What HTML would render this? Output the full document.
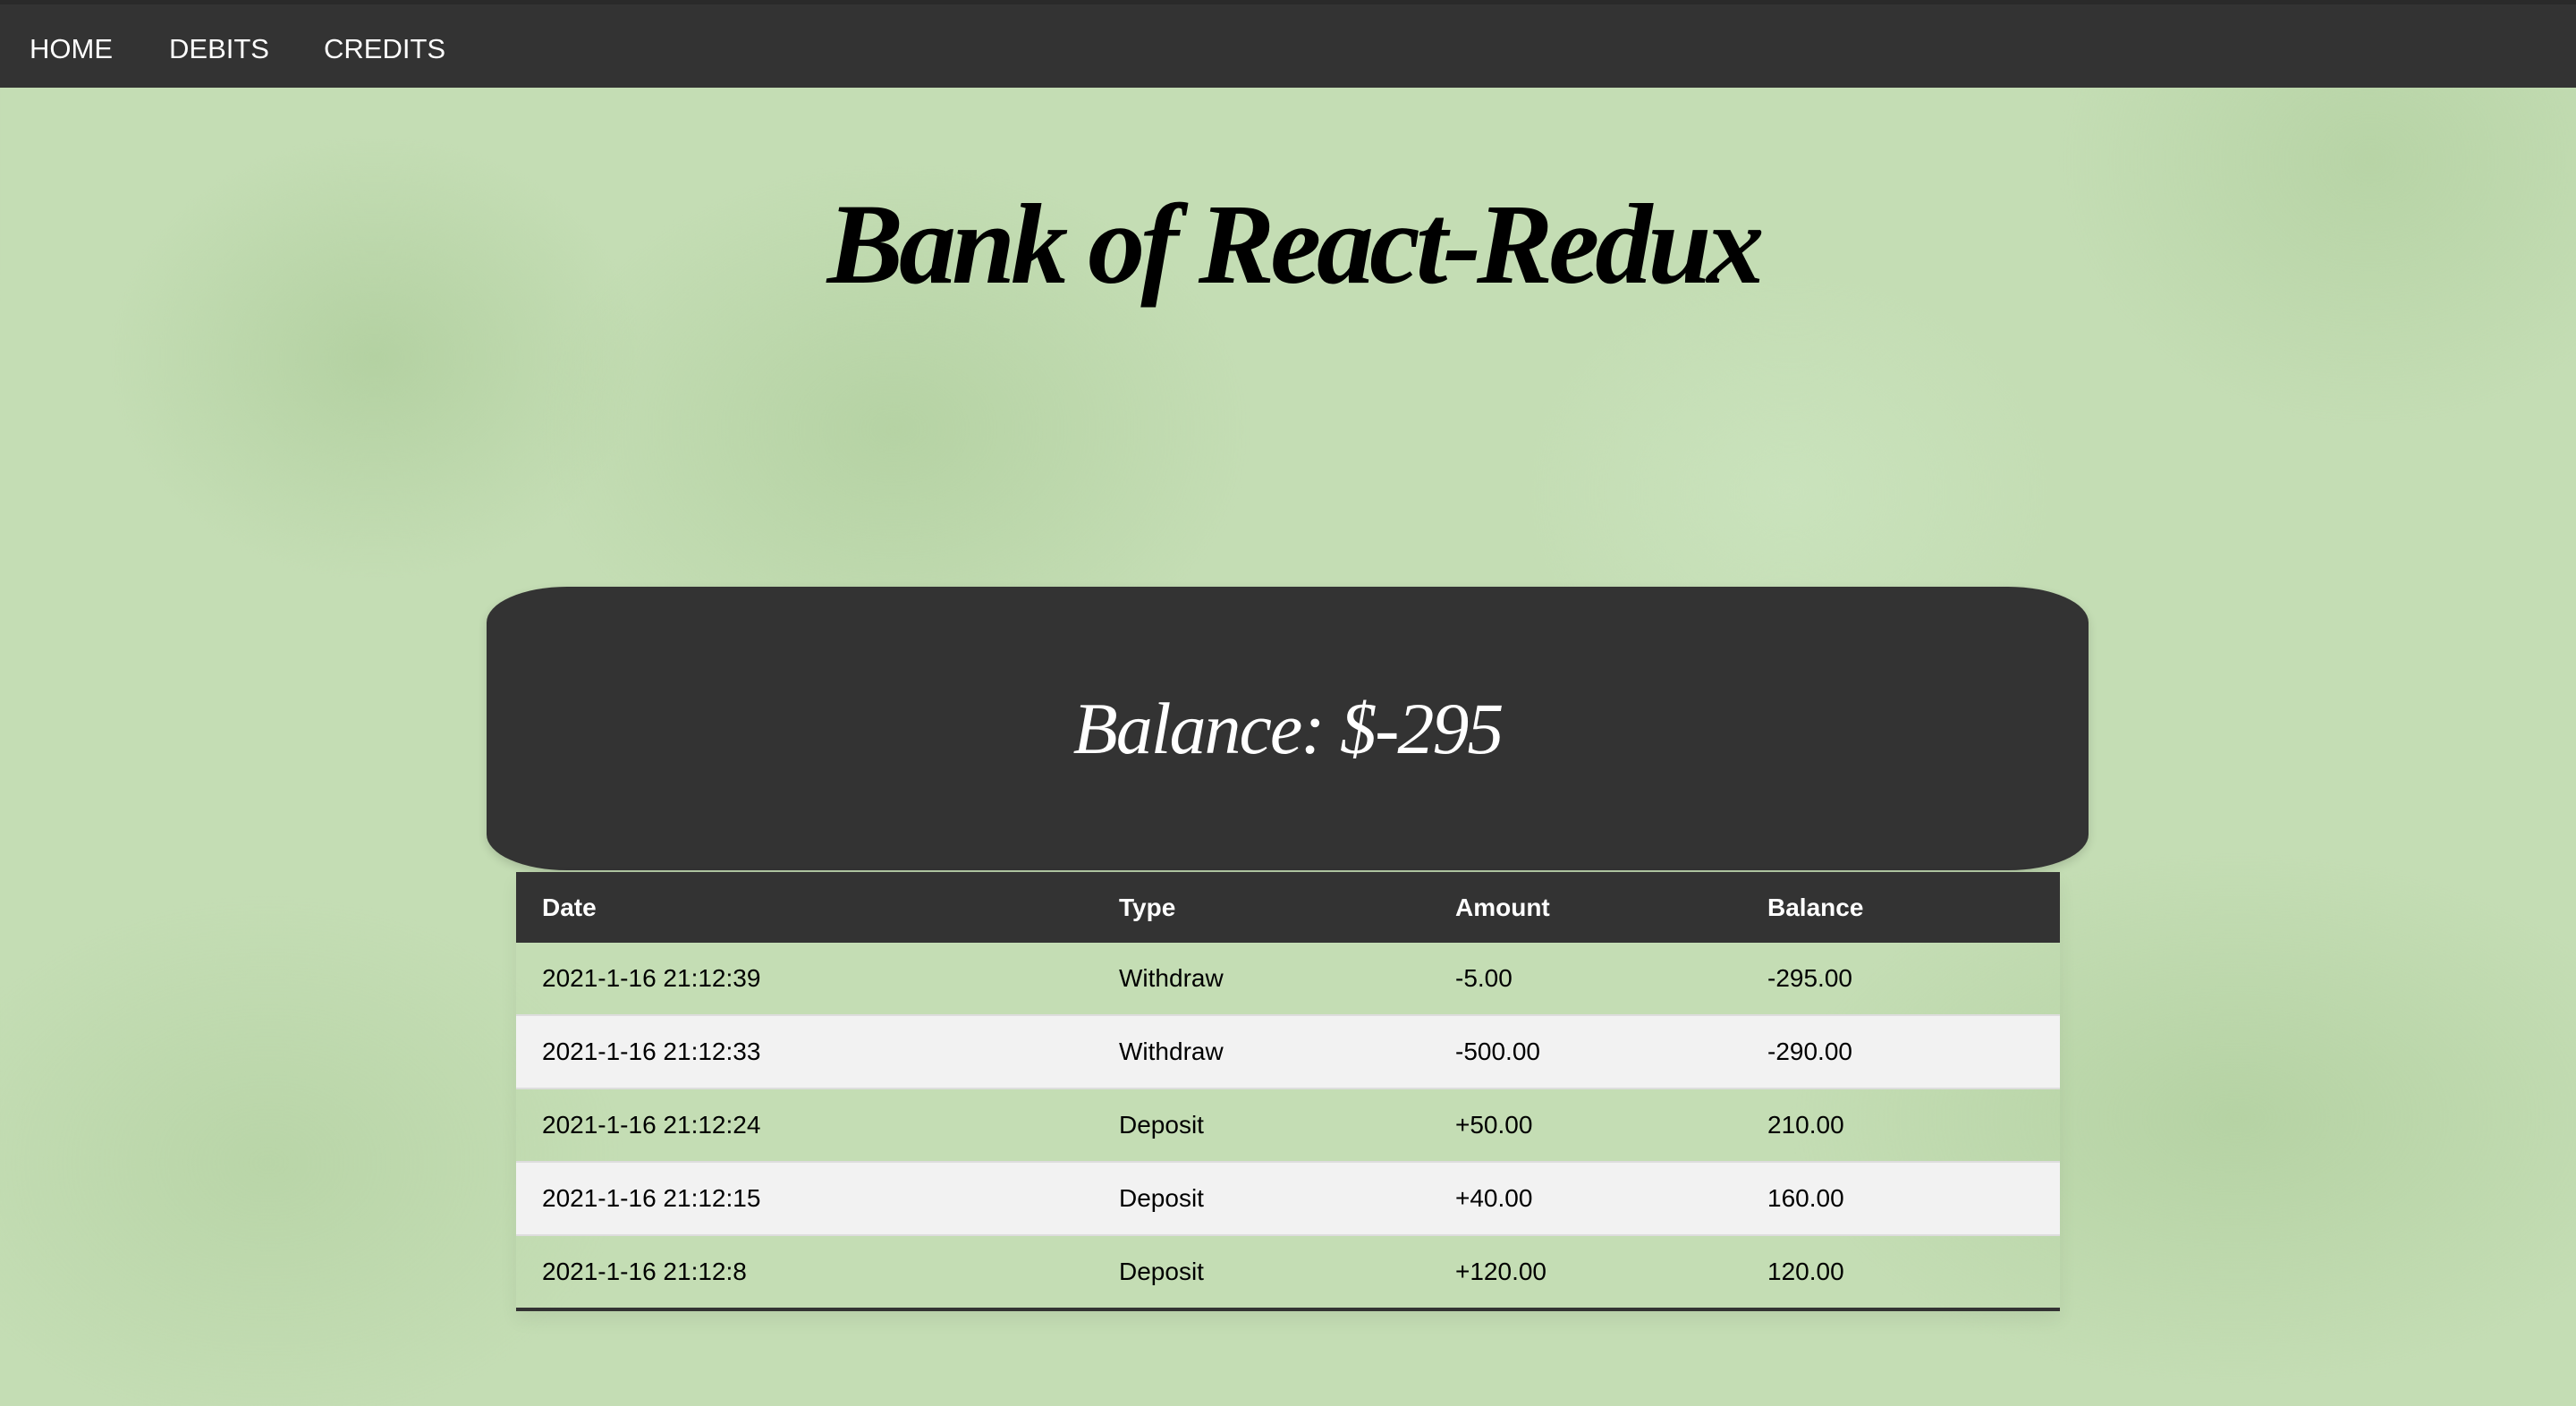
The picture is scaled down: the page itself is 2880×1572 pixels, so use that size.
<!DOCTYPE html>
<html><head><meta charset="utf-8"><style>
html,body{margin:0;padding:0;width:2880px;height:1572px;overflow:hidden}
body{position:relative;font-family:"Liberation Sans",sans-serif;
background:
radial-gradient(ellipse 300px 250px at 420px 400px,rgba(160,195,140,.45),transparent),
radial-gradient(ellipse 400px 300px at 1000px 480px,rgba(160,195,140,.4),transparent),
radial-gradient(ellipse 350px 300px at 2650px 180px,rgba(160,195,140,.35),transparent),
radial-gradient(ellipse 500px 300px at 2500px 1250px,rgba(160,195,140,.4),transparent),
radial-gradient(ellipse 400px 300px at 300px 1300px,rgba(160,195,140,.3),transparent),
radial-gradient(ellipse 300px 250px at 2000px 550px,rgba(210,235,200,.4),transparent),
#c4ddb4}
.nav{position:absolute;left:0;top:0;width:2880px;height:98px;background:#333;border-top:5px solid #2a2a2a;box-sizing:border-box}
.nav span{position:absolute;top:32px;color:#fff;font-size:31px}
h1{position:absolute;left:0;width:2880px;top:200px;margin:0;text-align:center;font-family:"Liberation Serif",serif;font-style:italic;font-weight:bold;font-size:128px;letter-spacing:-5px;color:#000;padding-left:6px}
.bal{position:absolute;left:544px;top:656px;width:1791px;height:317px;background:#333;border-radius:90px/40px;box-shadow:0 4px 10px rgba(0,0,0,.15)}
.bal div{position:absolute;left:0;width:100%;top:112px;text-align:center;color:#fff;font-family:"Liberation Serif",serif;font-style:italic;font-size:82px;letter-spacing:-2px}
table{position:absolute;left:577px;top:975px;width:1726px;border-collapse:collapse;font-size:28px;border-bottom:4px solid #333;box-shadow:0 10px 20px rgba(0,0,0,.06)}
th{background:#333;color:#fff;text-align:left;font-weight:bold;height:79px;padding:0 0 0 29px}
td{height:80px;padding:0 0 0 29px;color:#000;border-bottom:2px solid #ddd}
tr:nth-child(odd) td{background:#f2f2f2}
</style></head><body>
<div class="nav"><span style="left:33px">HOME</span><span style="left:189px">DEBITS</span><span style="left:362px">CREDITS</span></div>
<h1>Bank of React-Redux</h1>
<div class="bal"><div>Balance: $-295</div></div>
<table>
<tr><th style="width:616px">Date</th><th style="width:347px">Type</th><th style="width:320px">Amount</th><th>Balance</th></tr>
<tr><td>2021-1-16 21:12:39</td><td>Withdraw</td><td>-5.00</td><td>-295.00</td></tr>
<tr><td>2021-1-16 21:12:33</td><td>Withdraw</td><td>-500.00</td><td>-290.00</td></tr>
<tr><td>2021-1-16 21:12:24</td><td>Deposit</td><td>+50.00</td><td>210.00</td></tr>
<tr><td>2021-1-16 21:12:15</td><td>Deposit</td><td>+40.00</td><td>160.00</td></tr>
<tr><td>2021-1-16 21:12:8</td><td>Deposit</td><td>+120.00</td><td>120.00</td></tr>
</table>
</body></html>
